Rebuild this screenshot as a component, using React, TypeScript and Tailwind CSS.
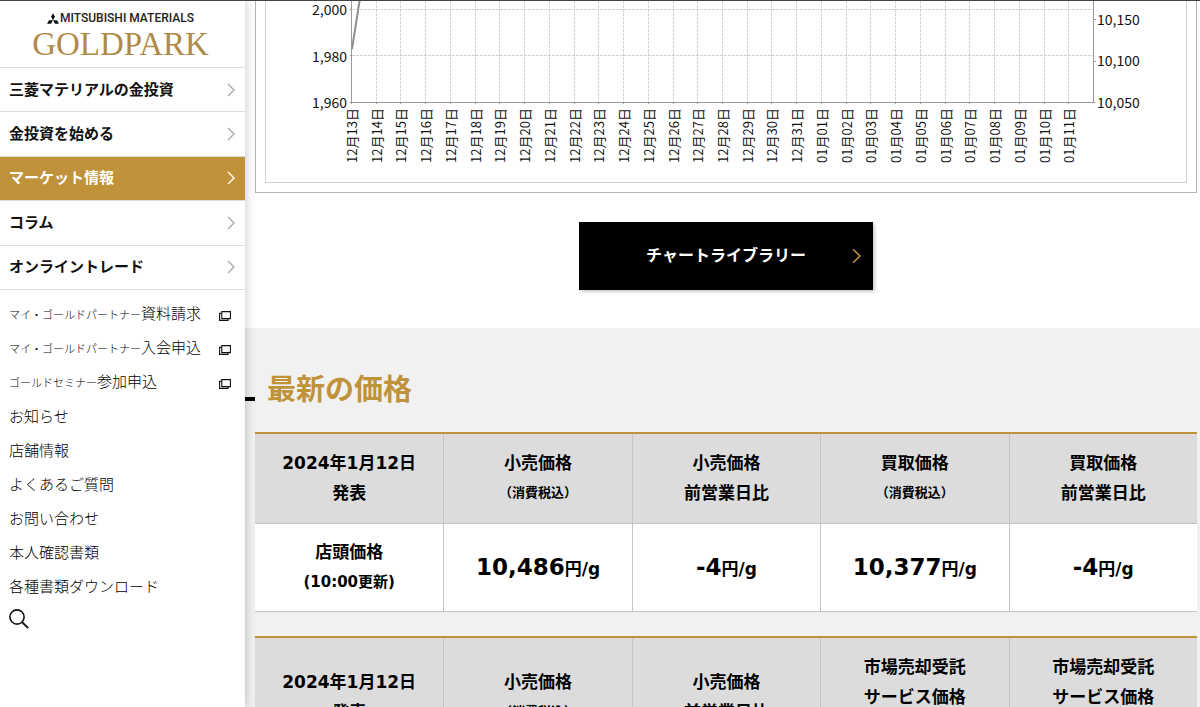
import React from 'react';

interface NavItem {
  label: string;
  active?: boolean;
}

interface SubItem {
  small?: string;
  label: string;
  external?: boolean;
}

interface HeadCell {
  lines: string[];
  note?: string;
}

const NAV_ITEMS: NavItem[] = [
  { label: '三菱マテリアルの金投資' },
  { label: '金投資を始める' },
  { label: 'マーケット情報', active: true },
  { label: 'コラム' },
  { label: 'オンライントレード' },
];

const SUB_ITEMS: SubItem[] = [
  { small: 'マイ・ゴールドパートナー', label: '資料請求', external: true },
  { small: 'マイ・ゴールドパートナー', label: '入会申込', external: true },
  { small: 'ゴールドセミナー', label: '参加申込', external: true },
  { label: 'お知らせ' },
  { label: '店舗情報' },
  { label: 'よくあるご質問' },
  { label: 'お問い合わせ' },
  { label: '本人確認書類' },
  { label: '各種書類ダウンロード' },
];

const STORE_HEAD: HeadCell[] = [
  { lines: ['2024年1月12日', '発表'] },
  { lines: ['小売価格'], note: '（消費税込）' },
  { lines: ['小売価格', '前営業日比'] },
  { lines: ['買取価格'], note: '（消費税込）' },
  { lines: ['買取価格', '前営業日比'] },
];

const MARKET_HEAD: HeadCell[] = [
  { lines: ['2024年1月12日', '発表'] },
  { lines: ['小売価格'], note: '（消費税込）' },
  { lines: ['小売価格', '前営業日比'] },
  { lines: ['市場売却受託', 'サービス価格'], note: '（消費税込）' },
  { lines: ['市場売却受託', 'サービス価格', '前営業日比'] },
];

const STORE_PRICES = ['10,486', '-4', '10,377', '-4'];

const pad = (n: number) => String(n).padStart(2, '0');

// 12/13 to 01/11
const CHART_DAYS = Array.from({ length: 30 }, (_, i) =>
  i < 19 ? `12月${pad(13 + i)}日` : `01月${pad(i - 18)}日`
);

const AXIS_LEFT = 86;
const AXIS_RIGHT = 828;
const AXIS_BOTTOM = 101;
const DAY_STEP = (AXIS_RIGHT - AXIS_LEFT) / 30;

const Chevron: React.FC<{ className: string }> = ({ className }) => (
  <svg viewBox="0 0 8 14" className={className} fill="none" stroke="currentColor" aria-hidden="true">
    <path d="M1 1l6 6-6 6" strokeWidth="1.4" />
  </svg>
);

const ExternalIcon: React.FC = () => (
  <svg viewBox="0 0 12 10" className="w-3 h-[10px] shrink-0 mt-0.5" fill="none" stroke="#111" aria-hidden="true">
    <path d="M2.8 0.6h8.6v7H2.8z" strokeWidth="1.1" />
    <path d="M2.8 2.4H0.6v7h8.4V7.6" strokeWidth="1.1" />
  </svg>
);

const Logo: React.FC = () => (
  <a href="#" className="flex flex-col items-center h-[67px] pt-[9px] pr-1 border-b border-[#dcdcdc]">
    <span className="flex items-center gap-px h-4 font-['Roboto',sans-serif] text-[12px] leading-4 font-medium text-[#222] whitespace-nowrap">
      <svg viewBox="0 0 24 21" className="w-3 h-[11px]" fill="#111" aria-hidden="true">
        <path d="M12 0l4 7-4 7-4-7zM12 14l-4 7H0l4-7zM12 14l4 7h8l-4-7z" />
      </svg>
      MITSUBISHI MATERIALS
    </span>
    <span className="h-9 font-['Liberation_Serif',serif] text-[33px] leading-9 text-[#b08a48]">GOLDPARK</span>
  </a>
);

const Sidebar: React.FC = () => (
  <aside className="relative z-10 w-[245px] shrink-0 bg-white shadow-[0_0_10px_rgba(0,0,0,0.25)] font-['Noto_Sans_CJK_JP',sans-serif]">
    <Logo />
    <nav>
      <ul className="grid grid-rows-5 h-[222px]">
        {NAV_ITEMS.map(item => (
          <li key={item.label} className="border-b border-[#dcdcdc]">
            <a
              href="#"
              className={`flex items-center justify-between h-full pl-[9px] pr-[10px] text-[15px] leading-5 font-bold ${
                item.active ? 'bg-[#c0933b] text-white' : 'text-[#111]'
              }`}
            >
              <span className="pb-0.5">{item.label}</span>
              <Chevron className={`w-2 h-[14px] ${item.active ? 'text-white' : 'text-[#aaa]'}`} />
            </a>
          </li>
        ))}
      </ul>
      <ul className="pt-2">
        {SUB_ITEMS.map(item => (
          <li key={item.label}>
            <a
              href="#"
              className="flex items-center justify-between h-[34px] pl-[9px] pr-[14px] text-[15px] leading-5 font-light text-black"
            >
              <span className="pb-[3px]">
                {item.small && <span className="text-[11px]">{item.small}</span>}
                {item.label}
              </span>
              {item.external && <ExternalIcon />}
            </a>
          </li>
        ))}
      </ul>
    </nav>
    <button type="button" aria-label="検索" className="block ml-[9px] mt-[5px]">
      <svg viewBox="0 0 20 20" className="w-5 h-5" fill="none" stroke="#111" aria-hidden="true">
        <circle cx="8" cy="8" r="7.1" strokeWidth="1.6" />
        <path d="M13 13l6.2 6.2" strokeWidth="1.9" />
      </svg>
    </button>
  </aside>
);

const PriceChart: React.FC = () => (
  <div className="border border-t-0 border-[#b4b4b4] px-[9px] pb-[9px]">
    <div className="border border-t-0 border-[#d2d2d2]">
      <svg
        viewBox="0 0 920 181"
        className="block w-full font-['Noto_Sans_CJK_JP',sans-serif] text-[14px]"
        fill="#111"
      >
        <g stroke="#d2d2d2" strokeDasharray="3 1">
          <path d={`M${AXIS_LEFT} 8.5H${AXIS_RIGHT}M${AXIS_LEFT} 54.5H${AXIS_RIGHT}`} />
          {CHART_DAYS.map((day, i) => (
            <path key={day} d={`M${Math.round(AXIS_LEFT + i * DAY_STEP) - 0.5} 0V${AXIS_BOTTOM}`} />
          ))}
        </g>
        <g stroke="#999" fill="none">
          <path d="M85.5 0V103M84 101.5H829M827.5 0V101M84 8.5h2M84 54.5h2M828 18.5h2M828 60.5h2" />
          {CHART_DAYS.map((day, i) => (
            <path key={day} d={`M${Math.round(AXIS_LEFT + i * DAY_STEP) - 0.5} 101v2`} />
          ))}
          <path d="M86 48L94 -3" stroke="#8e8e96" strokeWidth="2" />
        </g>
        <g textAnchor="end">
          <text x="81" y="14">2,000</text>
          <text x="81" y="61">1,980</text>
          <text x="81" y="107">1,960</text>
        </g>
        <g>
          <text x="831" y="24">10,150</text>
          <text x="831" y="65">10,100</text>
          <text x="831" y="107">10,050</text>
        </g>
        <g className="text-[13px]" textAnchor="end">
          {CHART_DAYS.map((day, i) => (
            <text key={day} transform={`translate(${Math.round(AXIS_LEFT + i * DAY_STEP) + 5} 107) rotate(-90)`}>
              {day}
            </text>
          ))}
        </g>
      </svg>
    </div>
  </div>
);

const TableHead: React.FC<{ cells: HeadCell[] }> = ({ cells }) => (
  <thead>
    <tr className="bg-[#dcdcdc]">
      {cells.map((cell, i) => (
        <th
          key={i}
          scope="col"
          className="pt-[14px] pb-[15px] border-b border-l border-[#c4c4c4] first:border-l-0 text-[17px] leading-[30px] font-bold"
        >
          {cell.lines.map(line => (
            <span key={line} className="block">{line}</span>
          ))}
          {cell.note && <span className="block text-[13px]">{cell.note}</span>}
        </th>
      ))}
    </tr>
  </thead>
);

const PriceRow: React.FC<{ title: string; sub: string; prices: string[] }> = ({ title, sub, prices }) => (
  <tbody>
    <tr className="bg-white">
      <th scope="row" className="pt-[13px] pb-[14px] border-b border-[#c4c4c4] text-[17px] leading-[30px] font-bold">
        <span className="block">{title}</span>
        <span className="block text-[15px]">{sub}</span>
      </th>
      {prices.map((price, i) => (
        <td key={i} className="border-b border-l border-[#c4c4c4] text-center text-[17px] leading-[30px] font-bold">
          <span className="text-[23px]">{price}</span>円/g
        </td>
      ))}
    </tr>
  </tbody>
);

const App: React.FC = () => {
  return (
    <div className="flex h-screen overflow-hidden border-t border-[#444] bg-white text-black">
      <Sidebar />
      <main className="flex-1 min-w-0 font-['DejaVu_Sans','Noto_Sans_CJK_JP',sans-serif]">
        <section className="pl-[10px] pr-[3px] pb-[38px]">
          <PriceChart />
          <a
            href="#"
            className="relative flex items-center justify-center w-[294px] h-[68px] mx-auto mt-[29px] bg-black text-white text-[16px] leading-6 font-bold shadow-[2px_2px_3px_rgba(0,0,0,0.2)]"
          >
            チャートライブラリー
            <Chevron className="absolute right-3 w-[9px] h-4 text-[#c0933b]" />
          </a>
        </section>

        <section className="bg-[#f1f1f1] pr-[3px] pt-10 pb-10">
          <h2 className="flex items-center gap-3 text-[29px] leading-[44px] font-bold text-[#c0933b]">
            <span className="w-[10px] h-1 mt-[18px] bg-black" />
            最新の価格
          </h2>
          <div className="pl-[10px] pt-5 space-y-6">
            <table className="w-full table-fixed border-separate border-spacing-0 border-t-2 border-[#c0933b]">
              <TableHead cells={STORE_HEAD} />
              <PriceRow title="店頭価格" sub="(10:00更新)" prices={STORE_PRICES} />
            </table>
            <table className="w-full table-fixed border-separate border-spacing-0 border-t-2 border-[#c0933b]">
              <TableHead cells={MARKET_HEAD} />
            </table>
          </div>
        </section>
      </main>
    </div>
  );
};

export default App;
